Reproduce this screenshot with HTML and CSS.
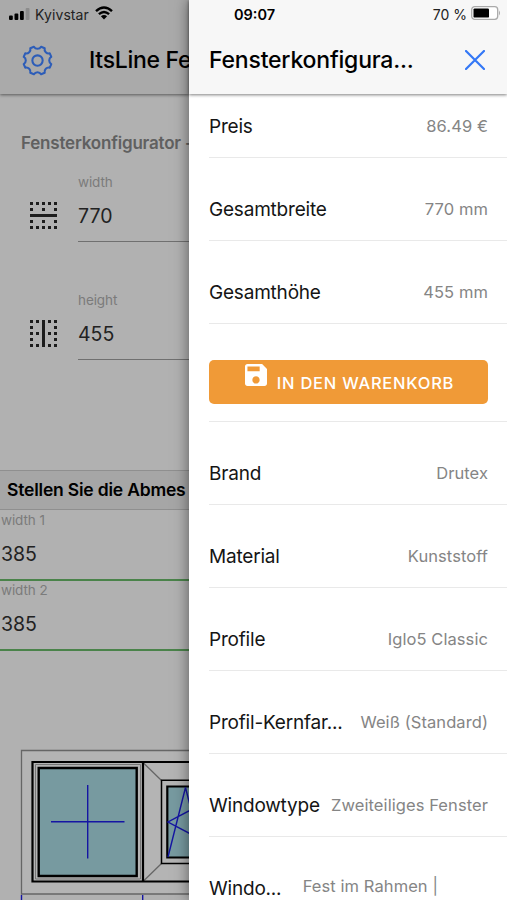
FILE: index.html
```
<!DOCTYPE html>
<html lang="de">

<head>
    <meta charset="UTF-8">
    <meta name="viewport" content="width=device-width, initial-scale=1.0">
    <title>Fensterkonfigurator</title>
    <link rel="stylesheet" href="styles.css">
</head>

<body>
    <div class="page">
        <div class="header">
            <svg class="gear" viewBox="-16 -16 32 32">
                <path d="M3.46-13.36L7-11.89A4 4 0 0 0 11.89-7L13.36-3.46A4 4 0 0 0 13.36 3.46L11.89 7A4 4 0 0 0 7 11.89L3.46 13.36A4 4 0 0 0-3.46 13.36L-7 11.89A4 4 0 0 0-11.89 7L-13.36 3.46A4 4 0 0 0-13.36-3.46L-11.89-7A4 4 0 0 0-7-11.89L-3.46-13.36A4 4 0 0 0 3.46-13.36Z"/>
                <circle r="5"/>
            </svg>
            <h1 class="title">ItsLine Fe</h1>
        </div>
        <h2 class="subtitle">Fensterkonfigurator -</h2>
        <div class="size">
            <!-- border horizontal -->
            <svg class="size-icon" viewBox="0 0 27 27">
                <path class="dots" d="M0 1.5h27M0 25.5h27"/>
                <path class="dots-side" d="M0 7.5h27M0 19.5h27"/>
                <path class="bar" d="M0 13.5h27"/>
            </svg>
            <div class="field">
                <label>width</label>
                <span class="value">770</span>
            </div>
        </div>
        <div class="size">
            <!-- border vertical -->
            <svg class="size-icon turned" viewBox="0 0 27 27">
                <path class="dots" d="M0 1.5h27M0 25.5h27"/>
                <path class="dots-side" d="M0 7.5h27M0 19.5h27"/>
                <path class="bar" d="M0 13.5h27"/>
            </svg>
            <div class="field">
                <label>height</label>
                <span class="value">455</span>
            </div>
        </div>
        <h3 class="divider">Stellen Sie die Abmes</h3>
        <div class="part">
            <label>width 1</label>
            <span class="value">385</span>
        </div>
        <div class="part">
            <label>width 2</label>
            <span class="value">385</span>
        </div>
        <svg class="drawing" viewBox="0 745 189 155">
            <g fill="none" stroke="#666" stroke-width="1.3">
                <path fill="#b4b4b4" d="M21.5 750.5H264V894H21.5z"/>
                <path d="M143.5 763L161.5 780.5M143.5 881L161.5 863.5"/>
            </g>
            <g fill="none" stroke="#000">
                <path stroke-width="2.2" d="M32.5 762H254V881.5H32.5zM143 762V881.5"/>
                <path stroke-width="1" stroke="#777" d="M35.5 764.5H140.5V879H35.5z"/>
                <path stroke-width="1.5" d="M161.5 780.3H240V863.5H161.5z"/>
                <path fill="#779aa0" stroke-width="2.4" d="M38.7 768H136.7V876H38.7z"/>
                <path fill="#779aa0" stroke-width="2.2" d="M167.3 786.5H234V857.5H167.3z"/>
            </g>
            <g fill="none" stroke="#1515a3" stroke-width="1.4">
                <path d="M87.7 785V858.5M51 821.7H124.5"/>
                <path d="M168 857L185.5 787.5L203 857M234 787L168 822L234 857"/>
                <path d="M21.5 895V900M142.7 895V900"/>
            </g>
        </svg>
    </div>

    <div class="menu">
        <div class="menu-header">
            <h1 class="title">Fensterkonfigura...</h1>
            <svg class="close" viewBox="0 0 20 20"><path d="M1 1L19 19M19 1L1 19"/></svg>
        </div>
        <ul class="list">
            <li><span class="name">Preis</span><span class="note">86.49 €</span></li>
            <li><span class="name">Gesamtbreite</span><span class="note">770 mm</span></li>
            <li><span class="name">Gesamthöhe</span><span class="note">455 mm</span></li>
            <li class="cart">
                <button class="btn">
                    <svg class="save" viewBox="3 3 18 18"><path d="M17 3H5c-1.11 0-2 .9-2 2v14c0 1.1.89 2 2 2h14c1.1 0 2-.9 2-2V7l-4-4zm-5 16c-1.66 0-3-1.34-3-3s1.34-3 3-3 3 1.34 3 3-1.34 3-3 3zm3-10H5V5h10v4z"/></svg>
                    <span>IN DEN WARENKORB</span>
                </button>
            </li>
            <li><span class="name">Brand</span><span class="note">Drutex</span></li>
            <li><span class="name">Material</span><span class="note">Kunststoff</span></li>
            <li><span class="name">Profile</span><span class="note">Iglo5 Classic</span></li>
            <li><span class="name">Profil-Kernfar...</span><span class="note">Weiß (Standard)</span></li>
            <li><span class="name">Windowtype</span><span class="note">Zweiteiliges Fenster</span></li>
            <li class="last"><span class="name">Windo...</span><span class="note">Fest im Rahmen |</span></li>
        </ul>
    </div>

    <div class="status">
        <div class="carrier">
            <svg class="signal" viewBox="0 0 21 12">
                <rect x="0" y="7.5" width="3.8" height="4.5" rx="1"/>
                <rect x="5.5" y="5.5" width="3.8" height="6.5" rx="1"/>
                <rect x="11" y="3" width="3.8" height="9" rx="1"/>
                <rect x="16.7" y="0" width="3.8" height="12" rx="1" fill="#8c8c8c"/>
            </svg>
            <span>Kyivstar</span>
            <svg class="wifi" viewBox="0 0 18 14">
                <path d="M1 5.2Q9-2.2 17 5.2M3.9 8.2Q9 3.6 14.1 8.2"/>
                <path class="wifi-dot" d="M9 13.5L5.9 10.3Q9 7.7 12.1 10.3z"/>
            </svg>
        </div>
        <b class="clock">09:07</b>
        <div class="power">
            <span>70 %</span>
            <svg class="battery" viewBox="0 0 30 14">
                <rect x=".7" y=".7" width="26" height="12.6" rx="3" fill="#fff" stroke="#aaa" stroke-width="1.3"/>
                <rect x="2.5" y="2.4" width="15.5" height="9.2" rx="1.2"/>
                <path d="M28 4.5q2 2.5 0 5z" fill="#aaa"/>
            </svg>
        </div>
    </div>
</body>

</html>
```
FILE: styles.css
```
* {
    box-sizing: border-box;
}

body {
    position: relative;
    display: flex;
    margin: 0;
    height: 900px;
    overflow: hidden;
    font-family: Inter, "Liberation Sans", sans-serif;
    color: #000;
}

h1,
h2,
h3,
ul {
    margin: 0;
    padding: 0;
}

svg {
    display: block;
    flex: none;
}

.page {
    flex: none;
    width: 189px;
    height: 900px;
    overflow: hidden;
    background-color: #b1b1b1;
    white-space: nowrap;
}

.header {
    display: flex;
    align-items: center;
    height: 94px;
    padding: 26px 0 0 21px;
    background-color: #aaa;
    box-shadow: 0 1px 3px rgba(0, 0, 0, .5);
}

.gear {
    width: 33px;
    height: 33px;
    fill: none;
    stroke: #2d5db8;
    stroke-width: 2;
    stroke-linejoin: round;
}

.title {
    font-size: 23px;
    line-height: 30px;
    font-weight: 500;
    letter-spacing: -.2px;
}

.header .title {
    margin-left: 35px;
    letter-spacing: -.3px;
}

.subtitle {
    margin: 38px 0 0 21px;
    font-size: 17px;
    line-height: 22px;
    font-weight: 600;
    letter-spacing: -.2px;
    color: #606060;
}

.size {
    display: flex;
    align-items: flex-end;
    height: 88px;
    padding-left: 30px;
}

.size + .size {
    margin-top: 30px;
}

.size-icon {
    width: 27px;
    height: 27px;
    margin-bottom: 13px;
    fill: none;
    stroke: #1c1c1c;
    stroke-width: 3;
}

.turned {
    transform: rotate(90deg);
}

.dots {
    stroke-dasharray: 3 3;
}

.dots-side {
    stroke-dasharray: 3 9;
}

.field {
    flex: 1;
    margin-left: 21px;
    border-bottom: 1px solid #707070;
}

label {
    display: block;
    font-size: 13.5px;
    line-height: 18px;
    letter-spacing: -.1px;
    color: #7b7b7b;
}

.value {
    display: block;
    font-size: 19.5px;
    line-height: 24px;
    color: #222;
}

.field .value {
    padding: 13px 0;
    box-sizing: content-box;
}

.divider {
    height: 40px;
    margin-top: 110px;
    padding-left: 7px;
    border-top: 1px solid #8f8f8f;
    border-bottom: 1px solid #8f8f8f;
    background-color: #a6a6a6;
    font-size: 17.5px;
    line-height: 38px;
    font-weight: 600;
    letter-spacing: -.2px;
}

.part {
    height: 70px;
    padding-left: 1px;
    border-bottom: 2px solid #4a834a;
}

.divider + .part {
    height: 71px;
    padding-top: 1px;
}

.part .value {
    margin-top: 13px;
}

.drawing {
    width: 189px;
    height: 155px;
    margin-top: 94px;
}

/* side menu */
.menu {
    position: relative;
    flex: 1;
    height: 900px;
    background-color: #fff;
    box-shadow: 0 0 14px rgba(0, 0, 0, .5);
    white-space: nowrap;
}

.menu-header {
    display: flex;
    align-items: center;
    justify-content: space-between;
    height: 94px;
    padding: 26px 22px 0 20px;
    background-color: #f7f7f7;
    box-shadow: 0 1px 3px rgba(0, 0, 0, .5);
}

.close {
    width: 20px;
    height: 20px;
    fill: none;
    stroke: #3478f6;
    stroke-width: 2.2;
    stroke-linecap: round;
}

.list {
    padding: 1px 0 0 20px;
    list-style: none;
}

.list li {
    display: flex;
    align-items: center;
    justify-content: space-between;
    height: 63px;
    margin-top: 20px;
    padding-right: 19px;
    border-bottom: 1px solid #e9e9e9;
}

.list li:first-child {
    margin-top: 0;
}

.name {
    font-size: 19px;
    letter-spacing: -.2px;
    color: #151515;
}

.note {
    font-size: 16.5px;
    letter-spacing: .08px;
    color: #858585;
}

.list .cart {
    height: 98px;
    margin-top: 0;
    padding-top: 18px;
}

.btn {
    display: flex;
    justify-content: center;
    width: 100%;
    height: 44px;
    padding: 4px 0 0 2px;
    border: 0;
    border-radius: 5px;
    background-color: #f09a37;
    font-family: inherit;
    font-size: 16.5px;
    line-height: 39px;
    font-weight: 500;
    letter-spacing: .75px;
    color: #fff;
}

.save {
    width: 22px;
    height: 22px;
    margin-right: 10px;
    fill: #fff;
}

.list .last {
    border: 0;
}

.last .note {
    margin: -5px 50px 0 0;
}

/* system bar on top of both */
.status {
    position: absolute;
    top: 0;
    left: 0;
    display: grid;
    grid-template-columns: 1fr auto 1fr;
    align-items: center;
    width: 507px;
    height: 28px;
    padding: 0 7px 0 9px;
    font-size: 14px;
}

.carrier,
.power {
    display: flex;
    align-items: center;
}

.carrier span {
    margin: 0 6px 0 5px;
    letter-spacing: .1px;
    color: #222;
}

.signal {
    width: 21px;
    height: 12px;
}

.wifi {
    width: 18px;
    height: 14px;
    margin-top: -2px;
    fill: none;
    stroke: #000;
    stroke-width: 2.4;
}

.wifi-dot {
    fill: #000;
    stroke: none;
}

.clock {
    font-size: 14.5px;
    font-weight: 600;
}

.power {
    justify-content: flex-end;
    color: #222;
}

.battery {
    width: 30px;
    height: 14px;
    margin: -2px -1px 0 4px;
}
```
